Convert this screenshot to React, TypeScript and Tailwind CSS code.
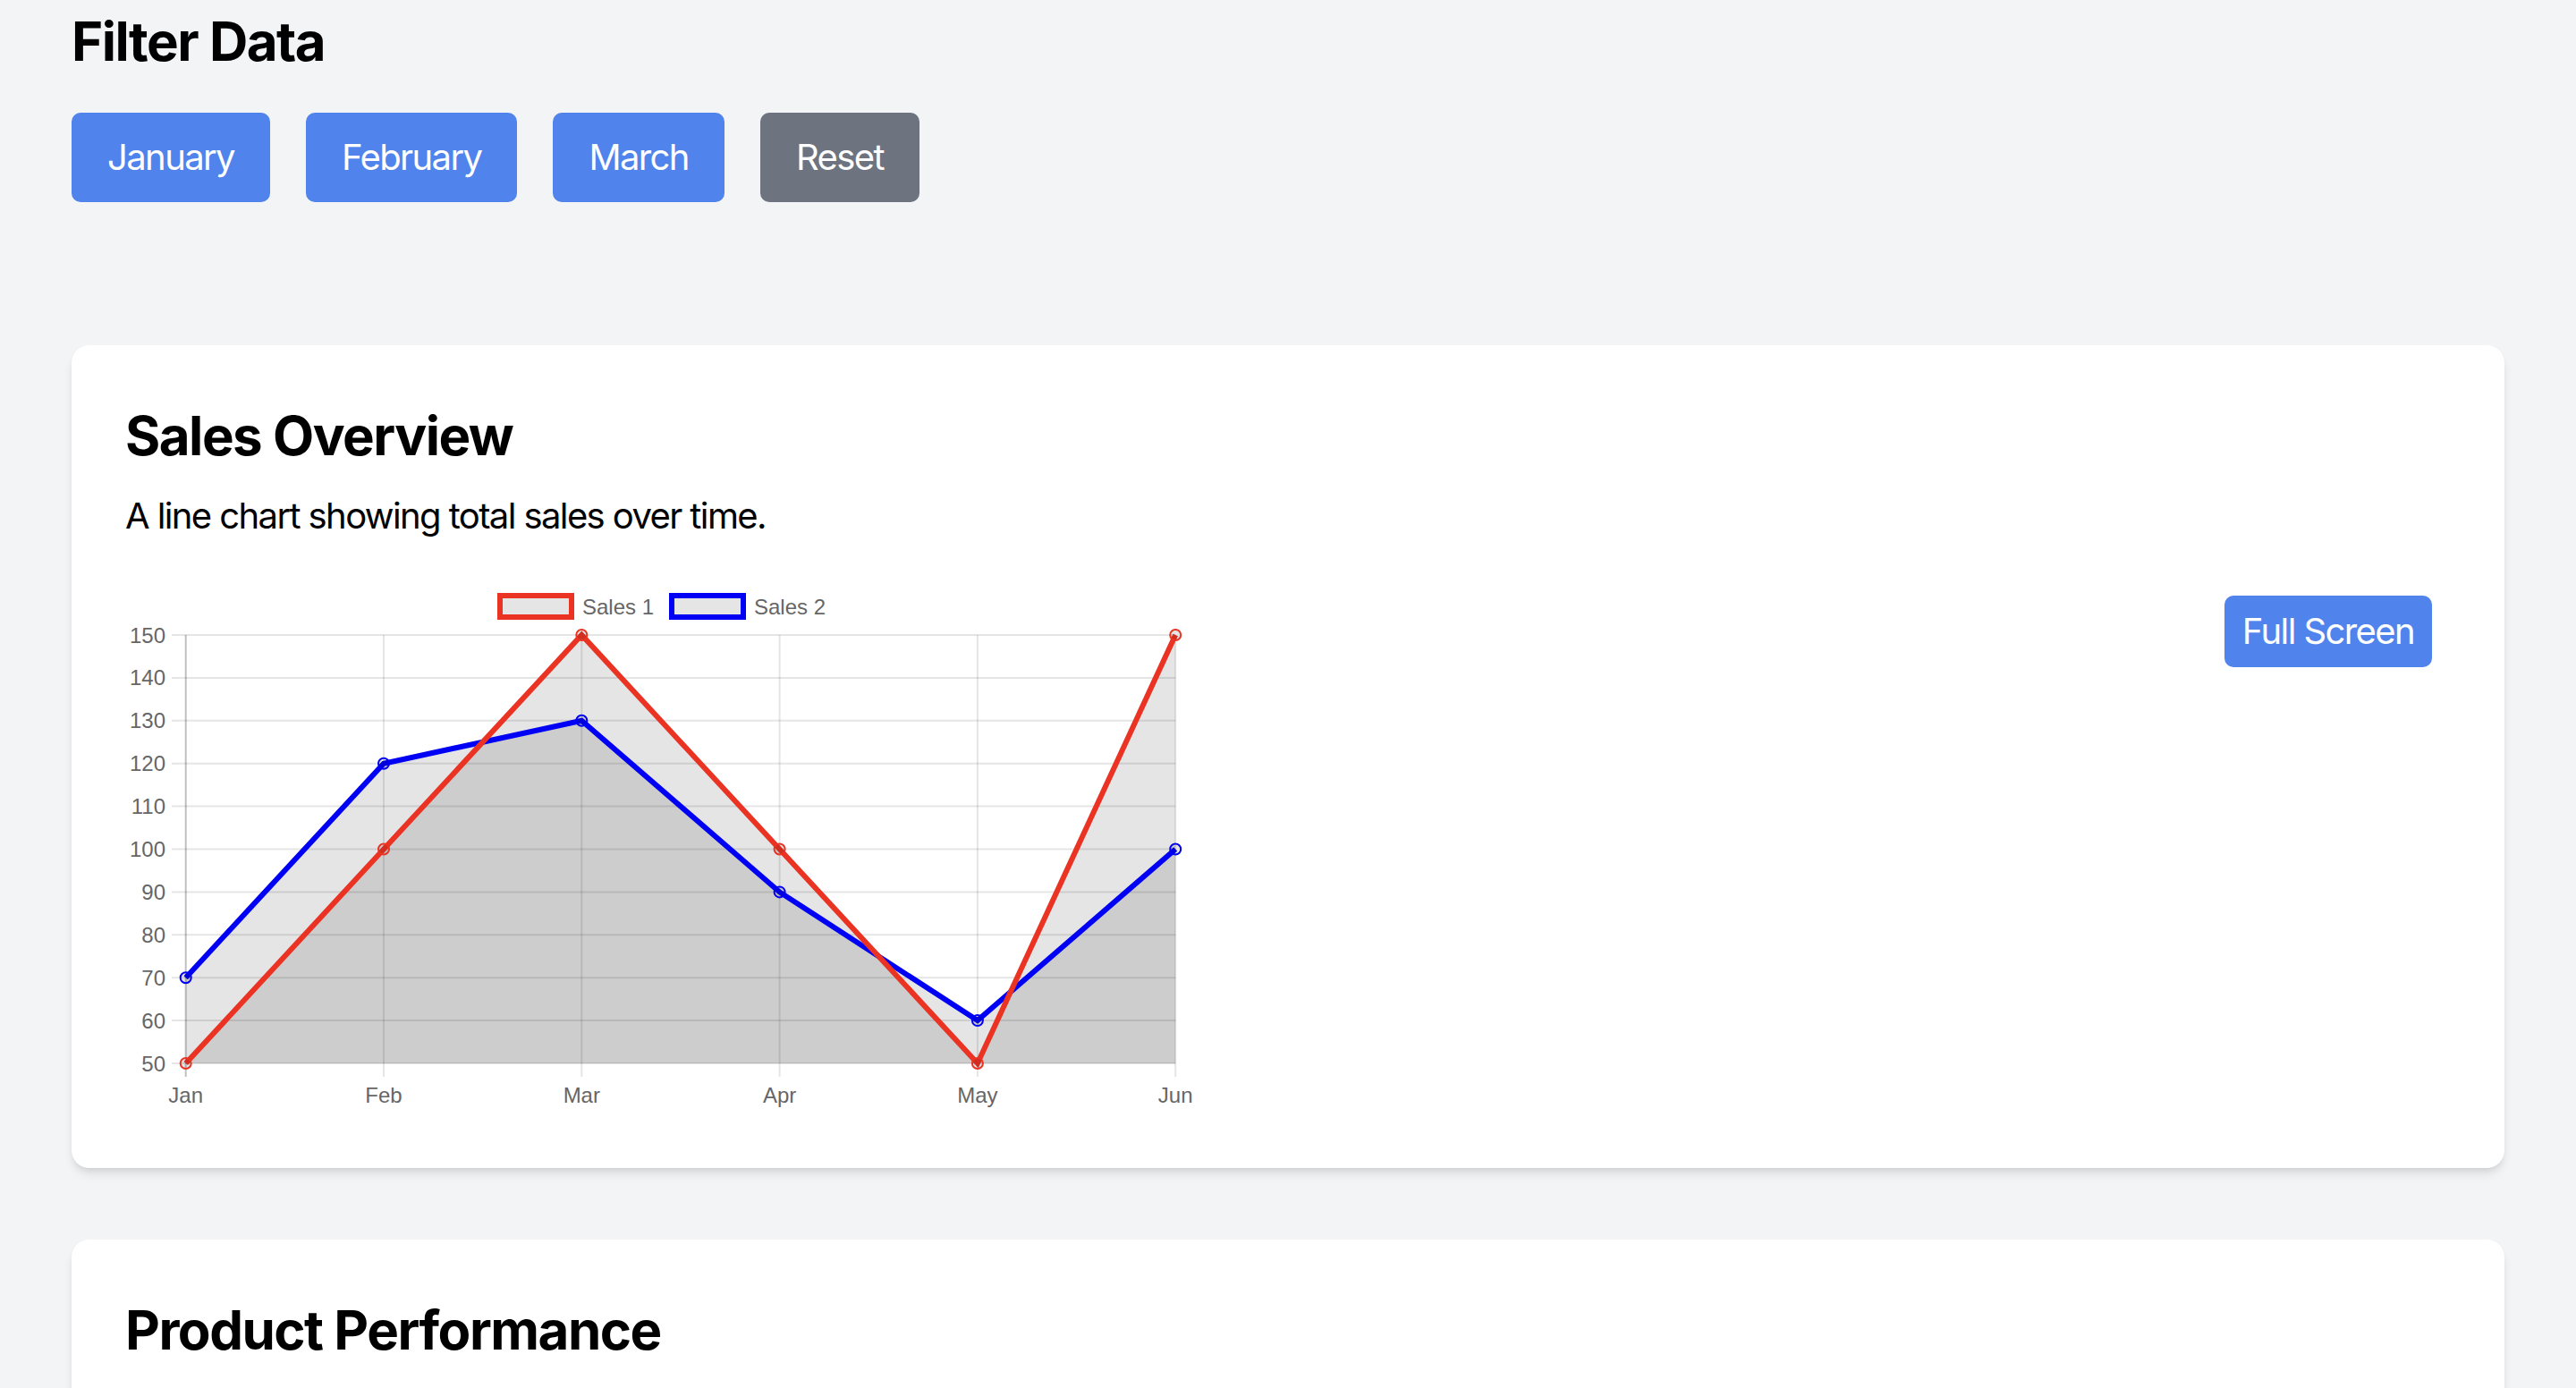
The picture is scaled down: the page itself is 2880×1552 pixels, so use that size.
const labels = ["Jan", "Feb", "Mar", "Apr", "May", "Jun"];
const sales1 = [50, 100, 150, 100, 50, 150];
const sales2 = [70, 120, 130, 90, 60, 100];
const ticks = [150, 140, 130, 120, 110, 100, 90, 80, 70, 60, 50];

const left = 67.7;
const step = 221.3;
const top = 64;
const bottom = 543;
const x = (i: number) => left + i * step;
const y = (v: number) => bottom - (v - 50) * 4.79;

function area(data: number[]) {
  const pts = data.map((v, i) => `${x(i)},${y(v)}`).join(" L ");
  return `M ${pts} L ${x(data.length - 1)},${bottom} L ${x(0)},${bottom} Z`;
}

function line(data: number[]) {
  return "M " + data.map((v, i) => `${x(i)},${y(v)}`).join(" L ");
}

function Series({ data, color }: { data: number[]; color: string }) {
  return (
    <g>
      <path d={line(data)} fill="none" stroke={color} strokeWidth={6} strokeLinejoin="miter" />
      {data.map((v, i) => (
        <circle key={i} cx={x(i)} cy={y(v)} r={6} fill="rgba(0,0,0,0.1)" stroke={color} strokeWidth={2} />
      ))}
    </g>
  );
}

function SalesChart() {
  const font = "'Liberation Sans', Arial, sans-serif";
  return (
    <svg width={1200} height={600} viewBox="0 0 1200 600" className="shrink-0">
      {/* legend */}
      <rect x={419} y={20} width={80} height={24} fill="rgba(0,0,0,0.1)" stroke="#ea3323" strokeWidth={6} />
      <text x={511} y={41} fontFamily={font} fontSize={24} fill="#666">Sales 1</text>
      <rect x={611} y={20} width={80} height={24} fill="rgba(0,0,0,0.1)" stroke="#0000f5" strokeWidth={6} />
      <text x={703} y={41} fontFamily={font} fontSize={24} fill="#666">Sales 2</text>

      {/* grid */}
      {ticks.map((t) => (
        <g key={t}>
          <line x1={52} x2={x(5)} y1={y(t)} y2={y(t)} stroke="rgba(0,0,0,0.1)" strokeWidth={2} />
          <text x={45} y={y(t) + 8.5} textAnchor="end" fontFamily={font} fontSize={24} fill="#666">
            {t}
          </text>
        </g>
      ))}
      {labels.map((l, i) => (
        <g key={l}>
          <line
            x1={x(i)}
            x2={x(i)}
            y1={top}
            y2={bottom + 15}
            stroke={i === 0 ? "rgba(0,0,0,0.25)" : "rgba(0,0,0,0.1)"}
            strokeWidth={2}
          />
          <text x={x(i)} y={587} textAnchor="middle" fontFamily={font} fontSize={24} fill="#666">
            {l}
          </text>
        </g>
      ))}

      {/* fills */}
      <path d={area(sales2)} fill="rgba(0,0,0,0.1)" />
      <path d={area(sales1)} fill="rgba(0,0,0,0.1)" />

      <Series data={sales2} color="#0000f5" />
      <Series data={sales1} color="#ea3323" />
    </svg>
  );
}

function FilterButton({ label, gray }: { label: string; gray?: boolean }) {
  return (
    <button
      className={
        gray
          ? "rounded-[10px] bg-[#6e7380] px-[40px] py-[22px] text-[40px] leading-[56px] tracking-[-1.6px] text-white"
          : "rounded-[10px] bg-[#5083ec] px-[40px] py-[22px] text-[40px] leading-[56px] tracking-[-1.6px] text-white"
      }
    >
      {label}
    </button>
  );
}

export default function App() {
  return (
    <div className="min-h-screen bg-[#f3f4f6] px-[80px] pb-[200px] pt-[10px] font-['Inter',sans-serif] text-black">
      <h1 className="text-[60px] font-bold leading-[72px] tracking-[-1.5px]">Filter Data</h1>
      <div className="mt-[44px] flex gap-[40px]">
        <FilterButton label="January" />
        <FilterButton label="February" />
        <FilterButton label="March" />
        <FilterButton label="Reset" gray />
      </div>

      <section className="mt-[160px] rounded-[20px] bg-white p-[60px] shadow-[0_8px_12px_-2px_rgba(0,0,0,0.1),0_4px_8px_-4px_rgba(0,0,0,0.1)]">
        <h2 className="text-[60px] font-bold leading-[82px] tracking-[-1.5px]">Sales Overview</h2>
        <p className="mt-[21px] text-[40px] leading-[56px] tracking-[-1.6px]">
          A line chart showing total sales over time.
        </p>
        <div className="mt-[41px] flex items-start justify-between">
          <SalesChart />
          <button className="mr-[21px] mt-[20px] rounded-[10px] bg-[#5083ec] px-[20px] py-[12px] text-[40px] leading-[56px] tracking-[-1.6px] text-white">
            Full Screen
          </button>
        </div>
      </section>

      <section className="mt-[80px] rounded-[20px] bg-white p-[60px] shadow-[0_8px_12px_-2px_rgba(0,0,0,0.1),0_4px_8px_-4px_rgba(0,0,0,0.1)]">
        <h2 className="text-[60px] font-bold leading-[82px] tracking-[-1.5px]">Product Performance</h2>
        <div className="h-[720px]" />
      </section>
    </div>
  );
}
